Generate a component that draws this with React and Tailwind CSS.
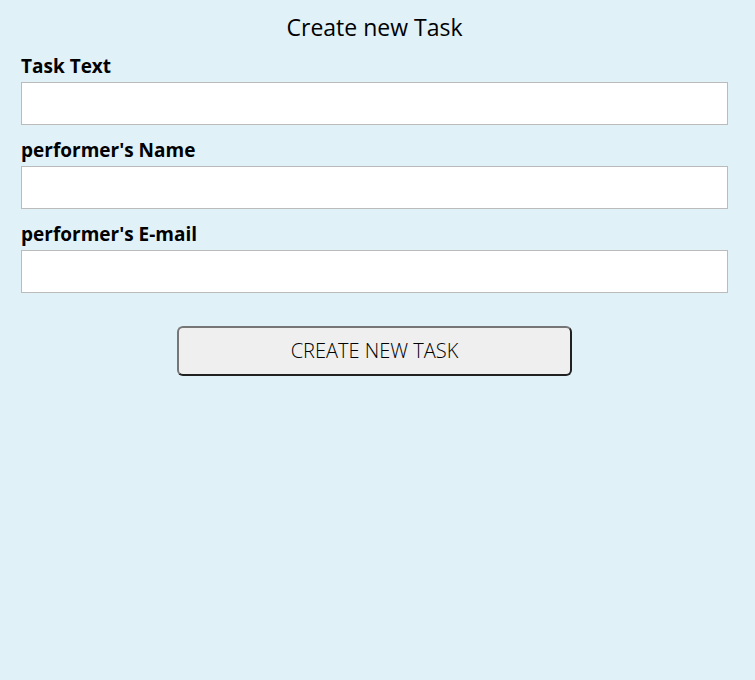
const fields = [
  { id: "text", label: "Task Text", type: "text" },
  { id: "name", label: "performer's Name", type: "text" },
  { id: "email", label: "performer's E-mail", type: "email" },
];

export default function App() {
  return (
    <main className="min-h-screen bg-[#e0f1f8] pt-3 pr-[27px] pl-[21px] font-['Open_Sans','Noto_Sans',sans-serif] text-black">
      <h1 className="mb-[2px] text-center text-[23px] leading-[30px] font-medium">Create new Task</h1>
      <form className="flex flex-col" onSubmit={(e) => e.preventDefault()}>
        {fields.map((f) => (
          <div key={f.id} className="flex h-[84px] flex-col pt-2">
            <label htmlFor={f.id} className="h-[30px] text-[19px] leading-[28px] font-bold">
              {f.label}
            </label>
            <input
              id={f.id}
              type={f.type}
              className="h-[43px] w-full border border-[#bbbbbb] bg-white px-3 text-[19px] outline-none"
            />
          </div>
        ))}
        <button
          type="submit"
          className="mx-auto mt-[30px] h-[50px] w-[395px] max-w-full rounded-md border-2 border-t-[#767676] border-r-[#212121] border-b-[#212121] border-l-[#767676] bg-[#efefef] text-[20px] font-light"
        >
          CREATE NEW TASK
        </button>
      </form>
    </main>
  );
}
